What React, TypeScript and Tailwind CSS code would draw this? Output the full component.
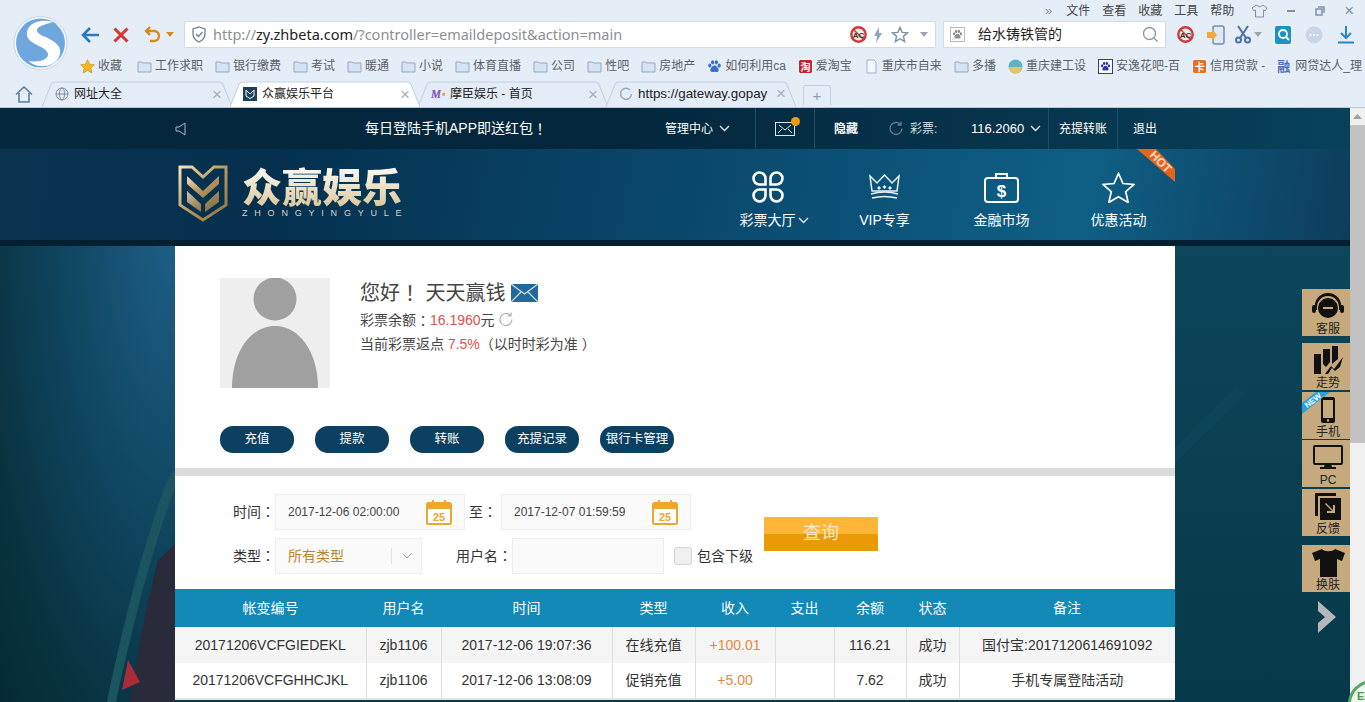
import { ReactNode } from "react";

const sans = "font-['Liberation_Sans','Noto_Sans_CJK_SC',sans-serif]";

// full-width punctuation sits centred in the reference, the TC cut draws it that way
const P = ({ children }: { children: string }) => <span className="font-['Noto_Sans_CJK_TC']">{children}</span>;

const Folder = () => (
  <svg width="15" height="14" viewBox="0 0 15 14">
    <path d="M1 3h4l1 1h8v9H1z" fill="#d5e3f3" stroke="#8fa9c6" />
  </svg>
);

const Star = () => (
  <svg width="15" height="15" viewBox="0 0 24 24">
    <path d="M12 1l3.4 7.3 7.6.9-5.6 5.3 1.5 7.9L12 18.4l-6.9 4 1.5-7.9L1 9.2l7.6-.9z" fill="#f5b81f" stroke="#c98f12" />
  </svg>
);

const Square = ({ bg, color, text }: { bg: string; color: string; text: string }) => (
  <svg width="15" height="15" viewBox="0 0 15 15">
    <rect x="0.5" y="0.5" width="14" height="14" rx="2" fill={bg} stroke={color} />
    <text x="7.5" y="11.5" fontSize="10" textAnchor="middle" fill={color} fontWeight="700" fontFamily="Noto Sans CJK SC">
      {text}
    </text>
  </svg>
);

const Paw = ({ color = "#3b6fc4", size = 15 }: { color?: string; size?: number }) => (
  <svg width={size} height={size} viewBox="0 0 16 16" fill={color}>
    <ellipse cx="3" cy="7" rx="1.7" ry="2.2" />
    <ellipse cx="6" cy="3.5" rx="1.7" ry="2.3" />
    <ellipse cx="10" cy="3.5" rx="1.7" ry="2.3" />
    <ellipse cx="13" cy="7" rx="1.7" ry="2.2" />
    <path d="M8 7c-2.4 0-4.5 3-4.5 5 0 2 2 2.2 4.5 1.5 2.5.7 4.5.5 4.5-1.5 0-2-2.1-5-4.5-5z" />
  </svg>
);

const bookmarks: { label: string; icon: ReactNode }[] = [
  { label: "收藏", icon: <Star /> },
  { label: "工作求职", icon: <Folder /> },
  { label: "银行缴费", icon: <Folder /> },
  { label: "考试", icon: <Folder /> },
  { label: "暖通", icon: <Folder /> },
  { label: "小说", icon: <Folder /> },
  { label: "体育直播", icon: <Folder /> },
  { label: "公司", icon: <Folder /> },
  { label: "性吧", icon: <Folder /> },
  { label: "房地产", icon: <Folder /> },
  { label: "如何利用ca", icon: <Paw /> },
  { label: "爱淘宝", icon: <Square bg="#c8202f" color="#ffffff" text="淘" /> },
  {
    label: "重庆市自来",
    icon: (
      <svg width="15" height="15" viewBox="0 0 15 15">
        <path d="M3 1h7l2 2v11H3z" fill="#f4f8fc" stroke="#9db3cb" />
      </svg>
    ),
  },
  { label: "多播", icon: <Folder /> },
  {
    label: "重庆建工设",
    icon: (
      <svg width="15" height="15" viewBox="0 0 15 15">
        <circle cx="7.5" cy="7.5" r="7" fill="#5cb4c8" />
        <path d="M1 8h13a6.5 6.5 0 0 1-13 0z" fill="#e8c266" />
      </svg>
    ),
  },
  {
    label: "安逸花吧-百",
    icon: (
      <span className="flex h-[15px] w-[15px] items-center justify-center border border-[#2a3bb0] bg-white">
        <Paw color="#2a3bb0" size={11} />
      </span>
    ),
  },
  { label: "信用贷款 -", icon: <Square bg="#ee6a1c" color="#ffffff" text="卡" /> },
  {
    label: "网贷达人_理",
    icon: <span className="w-[15px] text-[13px] leading-none font-bold text-[#4a6fc0]">融</span>,
  },
];

const TabShape = ({ active }: { active?: boolean }) => (
  <svg className="absolute inset-0 h-full w-full" viewBox="0 0 187 26" preserveAspectRatio="none">
    <path
      d="M0 26 L9 3 Q10 1 13 1 L174 1 Q177 1 178 3 L187 26"
      fill={active ? "#ffffff" : "#e4edf7"}
      stroke="#c3d1e0"
    />
  </svg>
);

const Tab = ({
  icon,
  label,
  active,
  className = "",
  textClass = "text-[12px]",
}: {
  icon: ReactNode;
  label: string;
  active?: boolean;
  className?: string;
  textClass?: string;
}) => (
  <div className={`relative flex h-[26px] w-[190px] items-center ${active ? "z-10" : ""} ${className}`}>
    <TabShape active={active} />
    <div className="relative flex w-full items-center pr-[10px] pl-[13px]">
      <span className="flex w-[19px] shrink-0 items-center">{icon}</span>
      <span className={`flex-1 truncate text-[#222] ${textClass}`}>{label}</span>
      <span className="text-[17px] leading-none text-[#a8b2bd]">×</span>
    </div>
  </div>
);

const AcIcon = () => (
  <svg width="17" height="17" viewBox="0 0 17 17">
    <circle cx="8.5" cy="8.5" r="7.2" fill="#fbe9e9" stroke="#cf3a3a" strokeWidth="2.4" />
    <path d="M3.5 3.5l10 10" stroke="#cf3a3a" strokeWidth="1.4" />
    <text x="8.5" y="11.5" fontSize="8" textAnchor="middle" fontWeight="700" fill="#333" fontFamily="Liberation Sans">
      AC
    </text>
  </svg>
);

const Caret = ({ color = "#9aa5b1" }: { color?: string }) => (
  <svg width="8" height="5" viewBox="0 0 8 5">
    <path d="M0 0h8L4 5z" fill={color} />
  </svg>
);

const BrowserChrome = () => (
  <div className={`h-[108px] bg-[#e5eef7] ${sans}`}>
    <div className="flex h-[82px]">
      <div className="flex w-[80px] shrink-0 pt-[15px] pl-[13px]">
        <svg width="55" height="56" viewBox="0 0 55 56">
          <circle cx="27.5" cy="28" r="26.5" fill="#ffffff" stroke="#bcd2ea" />
          <circle cx="27.5" cy="28" r="24.5" fill="#6fa6de" />
          <path
            d="M40 7C26 3 13 9 14 20c1 10 20 11 21 19 .5 5-8 9-19 7 6 7 24 8 30-4 5-11-6-17-16-21-6-3-8-6-4-9 3-2 8-3 14-5z"
            fill="#ffffff"
          />
        </svg>
      </div>
      <div className="min-w-0 flex-1">
        <div className="flex h-[21px] items-center pl-[965px] text-[12px] whitespace-nowrap text-[#444]">
          <span className="mr-[14px] text-[13px] text-[#7d8b99]">»</span>
          <div className="flex gap-[12px]">
            <span>文件</span>
            <span>查看</span>
            <span>收藏</span>
            <span>工具</span>
            <span>帮助</span>
          </div>
          <svg className="ml-[17px] shrink-0" width="16" height="14" viewBox="0 0 16 14">
            <path d="M5 1L1 4l2 3 1.5-1v7h8V6l1.5 1 2-3-4-3-3 2z" fill="none" stroke="#7f93a8" />
          </svg>
          <span className="ml-[20px] h-[2px] w-[8px] shrink-0 bg-[#7f93a8]" />
          <svg className="ml-[20px] shrink-0" width="10" height="10" viewBox="0 0 10 10">
            <path d="M3 1h6v6M1 3h6v6H1z" fill="none" stroke="#7f93a8" strokeWidth="1.5" />
          </svg>
          <span className="ml-[19px] text-[17px] leading-none text-[#7f93a8]">×</span>
        </div>
        <div className="flex h-[27px] items-center">
          <svg width="20" height="18" viewBox="0 0 20 18" fill="none" stroke="#2a78b8" strokeWidth="2.6">
            <path d="M19 9H3M10 2L3 9l7 7" />
          </svg>
          <svg className="ml-[13px]" width="16" height="16" viewBox="0 0 16 16" stroke="#d5372f" strokeWidth="3">
            <path d="M1.5 1.5l13 13M14.5 1.5l-13 13" />
          </svg>
          <svg className="ml-[15px]" width="18" height="18" viewBox="0 0 18 18" fill="none" stroke="#d98a1c" strokeWidth="2.4">
            <path d="M6 1L2 5l4 4M2 5h8a4.5 4.5 0 0 1 0 10H6" />
          </svg>
          <span className="mr-[10px] ml-[4px]">
            <Caret color="#d98a1c" />
          </span>
          <div className="flex h-[27px] w-[752px] items-center rounded-[2px] border border-[#cfdbe7] bg-white pr-[7px] pl-[6px]">
            <svg width="16" height="17" viewBox="0 0 16 17" fill="none" stroke="#6b7f93" strokeWidth="1.3">
              <path d="M8 1l6 2v5c0 4-3 6.5-6 8-3-1.5-6-4-6-8V3z" />
              <path d="M5 8l2.5 2.5L11.5 6" />
            </svg>
            <span className="ml-[6px] flex-1 font-['Noto_Sans',sans-serif] text-[14.5px] text-[#8a8f95]">
              http://<span className="text-[#222]">zy.zhbeta.com</span>/?controller=emaildeposit&amp;action=main
            </span>
            <AcIcon />
            <svg className="ml-[6px]" width="10" height="16" viewBox="0 0 10 16">
              <path d="M6 0L1 9h3l-1 7 6-10H6z" fill="#93a3b3" />
            </svg>
            <svg className="ml-[8px]" width="18" height="17" viewBox="0 0 24 24" fill="none" stroke="#7b90a6" strokeWidth="2">
              <path d="M12 2l3 7 7.5.7-5.7 4.9 1.8 7.4L12 18l-6.6 4 1.8-7.4L1.5 9.7 9 9z" />
            </svg>
            <span className="ml-[11px]">
              <Caret />
            </span>
          </div>
          <div className="ml-[7px] flex h-[27px] w-[223px] items-center border border-[#cfdbe7] bg-white px-[6px] text-[14px] text-[#222]">
            <span className="flex h-[15px] w-[15px] items-center justify-center border border-[#bbb]">
              <Paw color="#8b8b8b" size={11} />
            </span>
            <span className="ml-[13px] flex-1">给水铸铁管的</span>
            <svg width="17" height="17" viewBox="0 0 17 17" fill="none" stroke="#8d9aa7" strokeWidth="1.4">
              <circle cx="7.5" cy="7.5" r="6" />
              <path d="M12 12l3.5 3.5" />
            </svg>
          </div>
          <span className="ml-[11px]">
            <AcIcon />
          </span>
          <svg className="ml-[13px]" width="18" height="20" viewBox="0 0 18 20">
            <rect x="6" y="1" width="11" height="18" rx="2" fill="#dfe9f5" stroke="#6f90b5" strokeWidth="1.5" />
            <path d="M0 7h5V4l5 6-5 6v-3H0z" fill="#f0a93a" />
          </svg>
          <svg className="ml-[10px]" width="16" height="19" viewBox="0 0 16 19" fill="none" stroke="#4d6fb0" strokeWidth="2">
            <circle cx="3.5" cy="15" r="2.5" />
            <circle cx="12.5" cy="15" r="2.5" />
            <path d="M5 13L13 1M11 13L3 1" />
          </svg>
          <span className="ml-[3px]">
            <Caret />
          </span>
          <svg className="ml-[13px]" width="16" height="18" viewBox="0 0 16 18">
            <rect width="16" height="18" rx="2" fill="#1d93c2" />
            <circle cx="8" cy="8" r="4" fill="none" stroke="#fff" strokeWidth="1.8" />
            <path d="M11 11l3 3" stroke="#fff" strokeWidth="1.8" />
          </svg>
          <svg className="ml-[14px]" width="18" height="18" viewBox="0 0 18 18">
            <circle cx="9" cy="9" r="8.5" fill="#c9d6e8" />
            <circle cx="5.5" cy="9" r="1" fill="#fff" />
            <circle cx="9" cy="9" r="1" fill="#fff" />
            <circle cx="12.5" cy="9" r="1" fill="#fff" />
          </svg>
          <svg className="ml-[15px]" width="16" height="18" viewBox="0 0 16 18" fill="none" stroke="#2a84c4" strokeWidth="2">
            <path d="M8 0v12M3 7l5 5 5-5M0 16.5h16" />
          </svg>
        </div>
        <div className="mt-[7px] flex h-[22px] items-center gap-[12px] overflow-hidden text-[12px] whitespace-nowrap text-[#5a6066]">
          {bookmarks.map((b, i) => (
            <div key={b.label} className={`flex shrink-0 items-center gap-[3px] ${i === 0 ? "mr-[3px]" : ""}`}>
              {b.icon}
              <span>{b.label}</span>
            </div>
          ))}
        </div>
      </div>
    </div>
    <div className="flex h-[26px] items-end border-b border-[#b9c7d6]">
      <div className="flex h-[26px] w-[42px] shrink-0 items-center justify-center pl-[6px]">
        <svg width="18" height="17" viewBox="0 0 18 17" fill="none" stroke="#5d7d9c" strokeWidth="1.6">
          <path d="M1 8.5L9 1l8 7.5M4 7v9h10V7" />
        </svg>
      </div>
      <Tab
        label="网址大全"
        icon={
          <svg width="14" height="14" viewBox="0 0 14 14" fill="none" stroke="#7b8ea3">
            <circle cx="7" cy="7" r="6" />
            <ellipse cx="7" cy="7" rx="2.5" ry="6" />
            <path d="M1 7h12" />
          </svg>
        }
      />
      <Tab
        className="-ml-[2px]"
        active
        label="众赢娱乐平台"
        icon={
          <span className="flex h-[14px] w-[14px] items-center justify-center bg-[#1d3f5c]">
            <svg width="10" height="10" viewBox="0 0 10 10" fill="none" stroke="#fff">
              <path d="M1 1l4 4 4-4v6l-4 2.5L1 7z" />
            </svg>
          </span>
        }
      />
      <Tab
        className="-ml-[2px]"
        label="摩臣娱乐 - 首页"
        icon={
          <span className="font-serif text-[12px] font-bold text-[#8a5cc4] italic">
            M<span className="text-[#e8a33a]">•</span>
          </span>
        }
      />
      <Tab
        className="-ml-[2px]"
        textClass="text-[13.4px]"
        label="https://gateway.gopay"
        icon={
          <svg width="14" height="14" viewBox="0 0 14 14" fill="none" stroke="#9aa9b8" strokeWidth="1.5">
            <path d="M11 3a5.5 5.5 0 1 0 1.5 4" />
          </svg>
        }
      />
      <div className="mb-[2px] ml-[7px] flex h-[20px] w-[28px] items-center justify-center rounded-t-[3px] border border-b-0 border-[#c3d1e0] text-[15px] leading-none text-[#8aa0b5]">
        +
      </div>
    </div>
  </div>
);

const Chevron = () => (
  <svg width="11" height="7" viewBox="0 0 11 7" fill="none" stroke="#e8f0f5" strokeWidth="1.3">
    <path d="M1 1l4.5 4.5L10 1" />
  </svg>
);

const TopBar = () => (
  <div className="flex h-[41px] justify-center bg-[linear-gradient(90deg,#05283f,#04263c_45%,#07415a)] text-[12px] text-white">
    <div className="flex w-[1000px] items-stretch">
      <div className="flex w-[190px] items-center">
        <svg width="11" height="14" viewBox="0 0 11 14" fill="none" stroke="#aab8c4">
          <path d="M1 5h3l6-4v12L4 9H1z" />
        </svg>
      </div>
      <div className="flex w-[300px] items-center text-[14px]">
        每日登陆手机APP即送红包<P>！</P>
      </div>
      <div className="flex w-[90px] items-center gap-[6px]">
        管理中心
        <Chevron />
      </div>
      <div className="flex w-[59px] items-center justify-center border-l border-[#1d4f68]">
        <span className="relative flex">
          <svg width="20" height="14" viewBox="0 0 20 14" fill="none" stroke="#dbe6ee">
            <rect x="0.5" y="0.5" width="19" height="13" />
            <path d="M4 3l6 5 6-5M3 11l4-4M17 11l-4-4" />
          </svg>
          <span className="absolute -top-[5px] -right-[5px] h-[9px] w-[9px] rounded-full bg-[#eb9b14]" />
        </span>
      </div>
      <div className="flex w-[234px] items-center border-l border-[#1d4f68] pl-[19px]">
        <span className="font-bold">隐藏</span>
        <svg className="ml-[30px]" width="15" height="15" viewBox="0 0 15 15" fill="none" stroke="#5f7d90" strokeWidth="1.3">
          <path d="M12.5 3.5a6 6 0 1 0 1.5 4M13 0.5v3.5H9.5" />
        </svg>
        <span className="ml-[7px] w-[61px] text-[#d6e0e7]">彩票:</span>
        <span className="mr-[6px] text-[13px]">116.2060</span>
        <Chevron />
      </div>
      <div className="flex w-[69px] items-center border-l border-[#1d4f68] pl-[10px]">充提转账</div>
      <div className="flex flex-1 items-center border-l border-[#1d4f68] pl-[15px]">退出</div>
    </div>
  </div>
);

const navItems: { label: string; icon: ReactNode; chevron?: boolean }[] = [
  {
    label: "彩票大厅",
    chevron: true,
    icon: (
      <svg width="32" height="32" viewBox="0 0 32 32" fill="none" stroke="#fff" strokeWidth="2.6">
        <path d="M7.5 1.5a6 6 0 0 1 6 6v6h-6a6 6 0 0 1 0-12z" />
        <path d="M24.5 1.5a6 6 0 0 1 0 12h-6v-6a6 6 0 0 1 6-6z" />
        <path d="M7.5 30.500a6 6 0 0 0 6-6v-6h-6a6 6 0 0 0 0 12z" />
        <path d="M24.5 30.500a6 6 0 0 0 0-12h-6v6a6 6 0 0 0 6 6z" />
      </svg>
    ),
  },
  {
    label: "VIP专享",
    icon: (
      <svg width="31" height="26" viewBox="0 0 31 26" fill="none" stroke="#e9f1f6" strokeWidth="1.5">
        <path d="M1 2l7 7 7.5-8L23 9l7-7-2 15H3z" />
        <path d="M2 20c8-2.5 19-2.5 27 0M3 24c8-2 17-2 25 0" />
        <path d="M8 14l2-2 2 2-2 2zM13.5 13l2-2 2 2-2 2zM19 14l2-2 2 2-2 2z" fill="#e9f1f6" stroke="none" />
      </svg>
    ),
  },
  {
    label: "金融市场",
    icon: (
      <svg width="35" height="31" viewBox="0 0 35 31" fill="none" stroke="#fff" strokeWidth="2">
        <rect x="1" y="6" width="33" height="24" rx="3" />
        <path d="M12 6V2h11v4" />
        <text x="17.5" y="25" fontSize="17" fontWeight="700" fill="#fff" stroke="none" textAnchor="middle" fontFamily="Liberation Sans">
          $
        </text>
      </svg>
    ),
  },
  {
    label: "优惠活动",
    icon: (
      <svg width="33" height="31" viewBox="0 0 33 31" fill="none" stroke="#fff" strokeWidth="1.7">
        <path d="M16.5 1.5l4.5 10 11 1-8.3 7.2 2.5 10.8-9.7-5.7-9.7 5.7 2.5-10.8L1 12.5l11-1z" />
      </svg>
    ),
  },
];

const Logo = () => (
  <div className="flex items-center">
    <svg width="50" height="57" viewBox="0 0 50 57" fill="none">
      <defs>
        <linearGradient id="gold" x1="0" y1="0" x2="1" y2="1">
          <stop offset="0" stopColor="#f2e3bf" />
          <stop offset="0.5" stopColor="#b9975e" />
          <stop offset="1" stopColor="#8f7240" />
        </linearGradient>
      </defs>
      <path d="M2 2h12l11 10L36 2h12v38L25 55 2 40z" stroke="url(#gold)" strokeWidth="3" />
      <path d="M9 11l16 15 16-15v8L25 33 9 19z" fill="url(#gold)" />
      <path d="M9 26l14 13v8L9 37zM41 26L27 39v8l14-10z" fill="url(#gold)" opacity="0.85" />
    </svg>
    <div className="mb-[5px] ml-[14px]">
      <div className="bg-[linear-gradient(180deg,#ffffff,#dcc79b)] bg-clip-text font-['Noto_Sans_CJK_SC',sans-serif] text-[40px] leading-[44px] font-black text-transparent">
        众赢娱乐
      </div>
      <div className="mt-px font-['Liberation_Sans'] text-[9px] leading-[11px] tracking-[6.8px] whitespace-nowrap text-[#d9d3c2]">
        ZHONGYINGYULE
      </div>
    </div>
  </div>
);

const NavBar = () => (
  <div className="flex h-[91px] justify-center bg-[linear-gradient(100deg,#0a3350,#04304e_20%,#0c5379_65%,#0f5f85_80%,#0d3d5c)]">
    <div className="relative flex w-[1000px] items-center justify-between">
      <div className="mb-[2px] ml-[3px]">
        <Logo />
      </div>
      <div className="mr-[-2px] flex">
        {navItems.map((n) => (
          <div key={n.label} className="flex w-[117px] flex-col items-center pt-[9px] text-[14px] text-white">
            <div className="flex h-[39px] items-center">{n.icon}</div>
            <div className={`mt-[3px] flex items-center gap-[2px] ${n.chevron ? "pl-[13px]" : ""}`}>
              {n.label}
              {n.chevron && <Chevron />}
            </div>
          </div>
        ))}
      </div>
      <svg className="absolute top-0 right-0" width="39" height="33" viewBox="0 0 39 33">
        <path d="M1 0h19l19 20v13z" fill="#e8641c" />
      </svg>
      <span className="absolute top-[7px] right-[2px] rotate-[45deg] font-['Liberation_Sans'] text-[12px] leading-none font-bold text-[#f7dcc6]">
        HOT
      </span>
    </div>
  </div>
);

const profileButtons = ["充值", "提款", "转账", "充提记录", "银行卡管理"];

const Profile = () => (
  <div className="h-[222px] px-[45px] pt-[32px]">
    <div className="flex">
      <svg width="110" height="110" viewBox="0 0 110 110">
        <rect width="110" height="110" fill="#eeeeee" />
        <circle cx="55" cy="21" r="21.5" fill="#a0a0a0" />
        <path d="M12 110c0-35 18-62 43-62s43 27 43 62z" fill="#a0a0a0" />
      </svg>
      <div className="ml-[30px]">
        <div className="flex h-[30px] items-center text-[20px] whitespace-pre text-[#444]">
          您好<P>！</P> 天天赢钱
          <svg className="ml-[5px]" width="27" height="18" viewBox="0 0 27 18">
            <rect width="27" height="18" fill="#23699b" />
            <path d="M0 0l13.5 10L27 0M0 18l10-10M27 18L17 8" fill="none" stroke="#cde6f5" strokeWidth="1.2" />
          </svg>
        </div>
        <div className="mt-[2px] flex h-[20px] items-center text-[14px] text-[#444]">
          彩票余额<P>：</P>
          <span className="text-[#d9534f]">16.1960</span>元
          <svg className="mb-[2px] ml-[3px]" width="15" height="15" viewBox="0 0 15 15" fill="none" stroke="#a9a9a9" strokeWidth="1.1">
            <path d="M12.5 3.5a6 6 0 1 0 1.5 4M13 0.5v3.5H9.5" />
          </svg>
        </div>
        <div className="mt-[4px] flex h-[20px] items-center text-[14px] whitespace-pre text-[#444]">
          当前彩票返点 <span className="text-[#d9534f]">7.5%</span>
          <span>（以时时彩为准 ）</span>
        </div>
      </div>
    </div>
    <div className="mt-[38px] flex gap-[21px]">
      {profileButtons.map((b) => (
        <button key={b} className="h-[27px] w-[74px] rounded-[13px] bg-[#0c4060] text-[12.5px] whitespace-nowrap text-white">
          {b}
        </button>
      ))}
    </div>
  </div>
);

const Calendar = () => (
  <svg width="26" height="26" viewBox="0 0 26 26">
    <rect x="1" y="4" width="24" height="21" rx="1.5" fill="#fff" stroke="#eea62b" strokeWidth="2" />
    <rect x="1" y="4" width="24" height="6" fill="#eea62b" />
    <path d="M7 1v6M19 1v6" stroke="#eea62b" strokeWidth="2" />
    <text x="13" y="22" fontSize="11" fontWeight="700" textAnchor="middle" fill="#eea62b" fontFamily="Liberation Sans">
      25
    </text>
  </svg>
);

const DateInput = ({ value }: { value: string }) => (
  <div className="flex h-[36px] w-[190px] items-center justify-between border border-[#eeeeee] bg-[#fafafa] px-[12px] text-[12px] text-[#444]">
    {value}
    <Calendar />
  </div>
);

const Filters = () => (
  <div className="flex h-[113px] pt-[18px] pl-[58px] text-[14px] text-[#333]">
    <div className="w-[531px]">
      <div className="flex h-[36px] items-center">
        <span className="w-[42px]">
          时间<P>：</P>
        </span>
        <DateInput value="2017-12-06 02:00:00" />
        <span className="ml-[4px] w-[32px]">
          至<P>：</P>
        </span>
        <DateInput value="2017-12-07 01:59:59" />
      </div>
      <div className="mt-[8px] flex h-[36px] items-center">
        <span className="w-[42px]">
          类型<P>：</P>
        </span>
        <div className="flex h-[36px] w-[147px] items-center justify-between border border-[#eeeeee] bg-[#fafafa] pl-[12px] text-[#b8862e]">
          所有类型
          <span className="flex h-[16px] w-[30px] items-center justify-center border-l border-[#e2e2e2]">
            <svg width="10" height="6" viewBox="0 0 10 6" fill="none" stroke="#999">
              <path d="M0.5 0.5L5 5l4.5-4.5" />
            </svg>
          </span>
        </div>
        <span className="ml-[34px] w-[56px]">
          用户名<P>：</P>
        </span>
        <div className="h-[36px] w-[152px] border border-[#eeeeee] bg-[#fafafa]" />
        <span className="ml-[10px] h-[18px] w-[18px] rounded-[3px] border border-[#d5d5d5] bg-[#f0f0f0]" />
        <span className="ml-[5px] whitespace-nowrap">包含下级</span>
      </div>
    </div>
    <button className="mt-[23px] flex h-[34px] w-[114px] items-start justify-center bg-[linear-gradient(180deg,#ffb638_50%,#ea9a05_50%)] text-[18px] leading-[32px] text-[#f8e9cc]">
      查询
    </button>
  </div>
);

const rows = [
  ["20171206VCFGIEDEKL", "zjb1106", "2017-12-06 19:07:36", "在线充值", "+100.01", "", "116.21", "成功", "国付宝:2017120614691092"],
  ["20171206VCFGHHCJKL", "zjb1106", "2017-12-06 13:08:09", "促销充值", "+5.00", "", "7.62", "成功", "手机专属登陆活动"],
];

const headers = ["帐变编号", "用户名", "时间", "类型", "收入", "支出", "余额", "状态", "备注"];
const colWidths = ["w-[191px]", "w-[75px]", "w-[171px]", "w-[83px]", "w-[80px]", "w-[59px]", "w-[72px]", "w-[53px]", "w-[216px]"];

const RecordTable = () => (
  <table className="w-[1000px] table-fixed border-b-2 border-[#e4e4e4] text-center text-[14px] text-[#333]">
    <colgroup>
      {colWidths.map((w, i) => (
        <col key={i} className={w} />
      ))}
    </colgroup>
    <thead>
      <tr className="h-[38px] bg-[#1289b7] text-white">
        {headers.map((h) => (
          <th key={h} className="font-normal">
            {h}
          </th>
        ))}
      </tr>
    </thead>
    <tbody>
      {rows.map((r, i) => (
        <tr key={r[0]} className={`h-[36px] ${i === 0 ? "bg-[#f5f5f5]" : "bg-white"}`}>
          {r.map((c, j) => (
            <td key={j} className={`whitespace-nowrap ${j > 0 ? "border-l border-[#dddddd]" : ""} ${j === 4 ? "text-[#e3893c]" : ""}`}>
              {c}
            </td>
          ))}
        </tr>
      ))}
    </tbody>
  </table>
);

const sideItems: { label: string; mt: string; icon: ReactNode; isNew?: boolean }[] = [
  {
    label: "客服",
    mt: "",
    icon: (
      <svg width="32" height="27" viewBox="0 0 32 27" fill="#111">
        <path d="M3 17C1 7 8 0 16 0s15 7 13 17h-2C28 9 23 3 16 3S4 9 5 17z" />
        <circle cx="16" cy="15" r="10" />
        <path d="M11 15h10" stroke="#c6aa7e" strokeWidth="2" />
        <rect x="0" y="12" width="4" height="8" rx="2" />
        <rect x="28" y="12" width="4" height="8" rx="2" />
      </svg>
    ),
  },
  {
    label: "走势",
    mt: "mt-[7px]",
    icon: (
      <svg width="29" height="29" viewBox="0 0 29 29" fill="#111">
        <rect x="0" y="8" width="7" height="20" />
        <path d="M9 3h7v13l-4 5-3-3zM18 0h6v13l-6 5zM11 28l6-8 3 3 9-12-3 10-5 4-3-3-4 6z" />
      </svg>
    ),
  },
  {
    label: "手机",
    mt: "mt-[2px]",
    isNew: true,
    icon: (
      <svg width="14" height="26" viewBox="0 0 14 26">
        <rect width="14" height="26" rx="2" fill="#111" />
        <rect x="2" y="3" width="10" height="18" fill="#c6aa7e" />
        <circle cx="7" cy="23.5" r="1.2" fill="#c6aa7e" />
      </svg>
    ),
  },
  {
    label: "PC",
    mt: "mt-px",
    icon: (
      <svg width="30" height="25" viewBox="0 0 30 25">
        <rect x="1" y="1" width="28" height="18" rx="1" fill="none" stroke="#111" strokeWidth="2" />
        <path d="M12 19h6l1 3h4v2H7v-2h4z" fill="#111" />
      </svg>
    ),
  },
  {
    label: "反馈",
    mt: "mt-[2px]",
    icon: (
      <svg width="26" height="27" viewBox="0 0 26 27">
        <path d="M0 0h21v3H3v20H0z" fill="#111" />
        <rect x="5" y="5" width="21" height="22" fill="#111" />
        <path d="M11 10l7 7v-5l2 0v8h-8v-2h5l-7-7z" fill="#c6aa7e" />
      </svg>
    ),
  },
  {
    label: "换肤",
    mt: "mt-[9px]",
    icon: (
      <svg width="33" height="28" viewBox="0 0 33 28" fill="#111">
        <path d="M10 0c2 3 11 3 13 0l10 4-3 8-5-2v18H8V10l-5 2-3-8z" />
      </svg>
    ),
  },
];

const SideRail = () => (
  <div className="absolute top-[181px] right-0 flex w-[48px] flex-col items-center text-[12px] text-[#222]">
    {sideItems.map((s) => (
      <div key={s.label} className={`relative flex h-[47px] w-[48px] flex-col items-center overflow-hidden bg-[#c6aa7e] pl-[4px] ${s.mt}`}>
        <div className="flex h-[33px] items-center pt-[2px]">{s.icon}</div>
        <span className="leading-[14px]">{s.label}</span>
        {s.isNew && (
          <>
            <svg className="absolute top-0 left-0" width="28" height="22" viewBox="0 0 28 22">
              <path d="M14 0h14L0 22V11z" fill="#2a9fd8" />
            </svg>
            <span className="absolute top-[5px] left-[2px] -rotate-[38deg] font-['Liberation_Sans'] text-[8px] leading-none font-bold text-white">
              NEW
            </span>
          </>
        )}
      </div>
    ))}
    <svg className="mt-[9px] ml-[2px]" width="18" height="32" viewBox="0 0 18 32">
      <path d="M0 0l18 16L0 32v-10l7-6-7-6z" fill="#b4b8ba" />
    </svg>
  </div>
);

const PageBackdrop = () => (
  <svg className="absolute inset-0 h-full w-full" viewBox="0 0 1350 594" preserveAspectRatio="none">
    <path d="M175 362L168 370C145 430 122 520 107 594H116C132 520 152 440 175 380z" fill="#1a5560" />
    <path d="M175 436L158 452C148 490 138 540 130 594H175z" fill="#2a2b3a" />
    <path d="M128 552l12 22-18 8z" fill="#a82c3a" />
    <path d="M1175 340l60-60 10 6-70 70z" fill="#155469" opacity="0.25" />
  </svg>
);

const Site = () => (
  <div className={`relative h-[594px] w-[1350px] overflow-hidden bg-[linear-gradient(180deg,#0e4a63,#0a4052_55%,#063a4a)] ${sans}`}>
    <div className="absolute inset-y-0 left-0 w-[175px] bg-[radial-gradient(ellipse_at_100%_20%,#1e5f88_0%,#0f4660_45%,#08323f_80%,#052a35_100%)]" />
    <PageBackdrop />
    <div className="relative">
      <TopBar />
      <NavBar />
      <div className="h-[6px] bg-[#031f30]" />
      <div className="mx-auto w-[1000px] bg-white">
        <Profile />
        <div className="h-[8px] bg-[#dcdcdc]" />
        <Filters />
        <RecordTable />
      </div>
    </div>
    <SideRail />
  </div>
);

const Scrollbar = () => (
  <div className="flex h-[594px] w-[15px] flex-col items-center bg-[#f0f0f0]">
    <div className="flex h-[17px] items-center">
      <svg width="9" height="5" viewBox="0 0 9 5">
        <path d="M4.5 0L9 5H0z" fill="#a0a0a0" />
      </svg>
    </div>
    <div className="h-[318px] w-full bg-[#c2c2c2]" />
  </div>
);

export default function App() {
  return (
    <div className="relative h-[702px] w-[1365px] overflow-hidden">
      <BrowserChrome />
      <div className="flex">
        <Site />
        <Scrollbar />
      </div>
      <div className="absolute top-[680px] left-[1348px] h-[48px] w-[48px] rounded-full border-[3px] border-[#55a868] bg-[#eef7ec] pt-[8px] pl-[6px] font-['Liberation_Sans'] text-[11px] leading-none font-bold text-[#3f9a58]">
        EI
      </div>
    </div>
  );
}
